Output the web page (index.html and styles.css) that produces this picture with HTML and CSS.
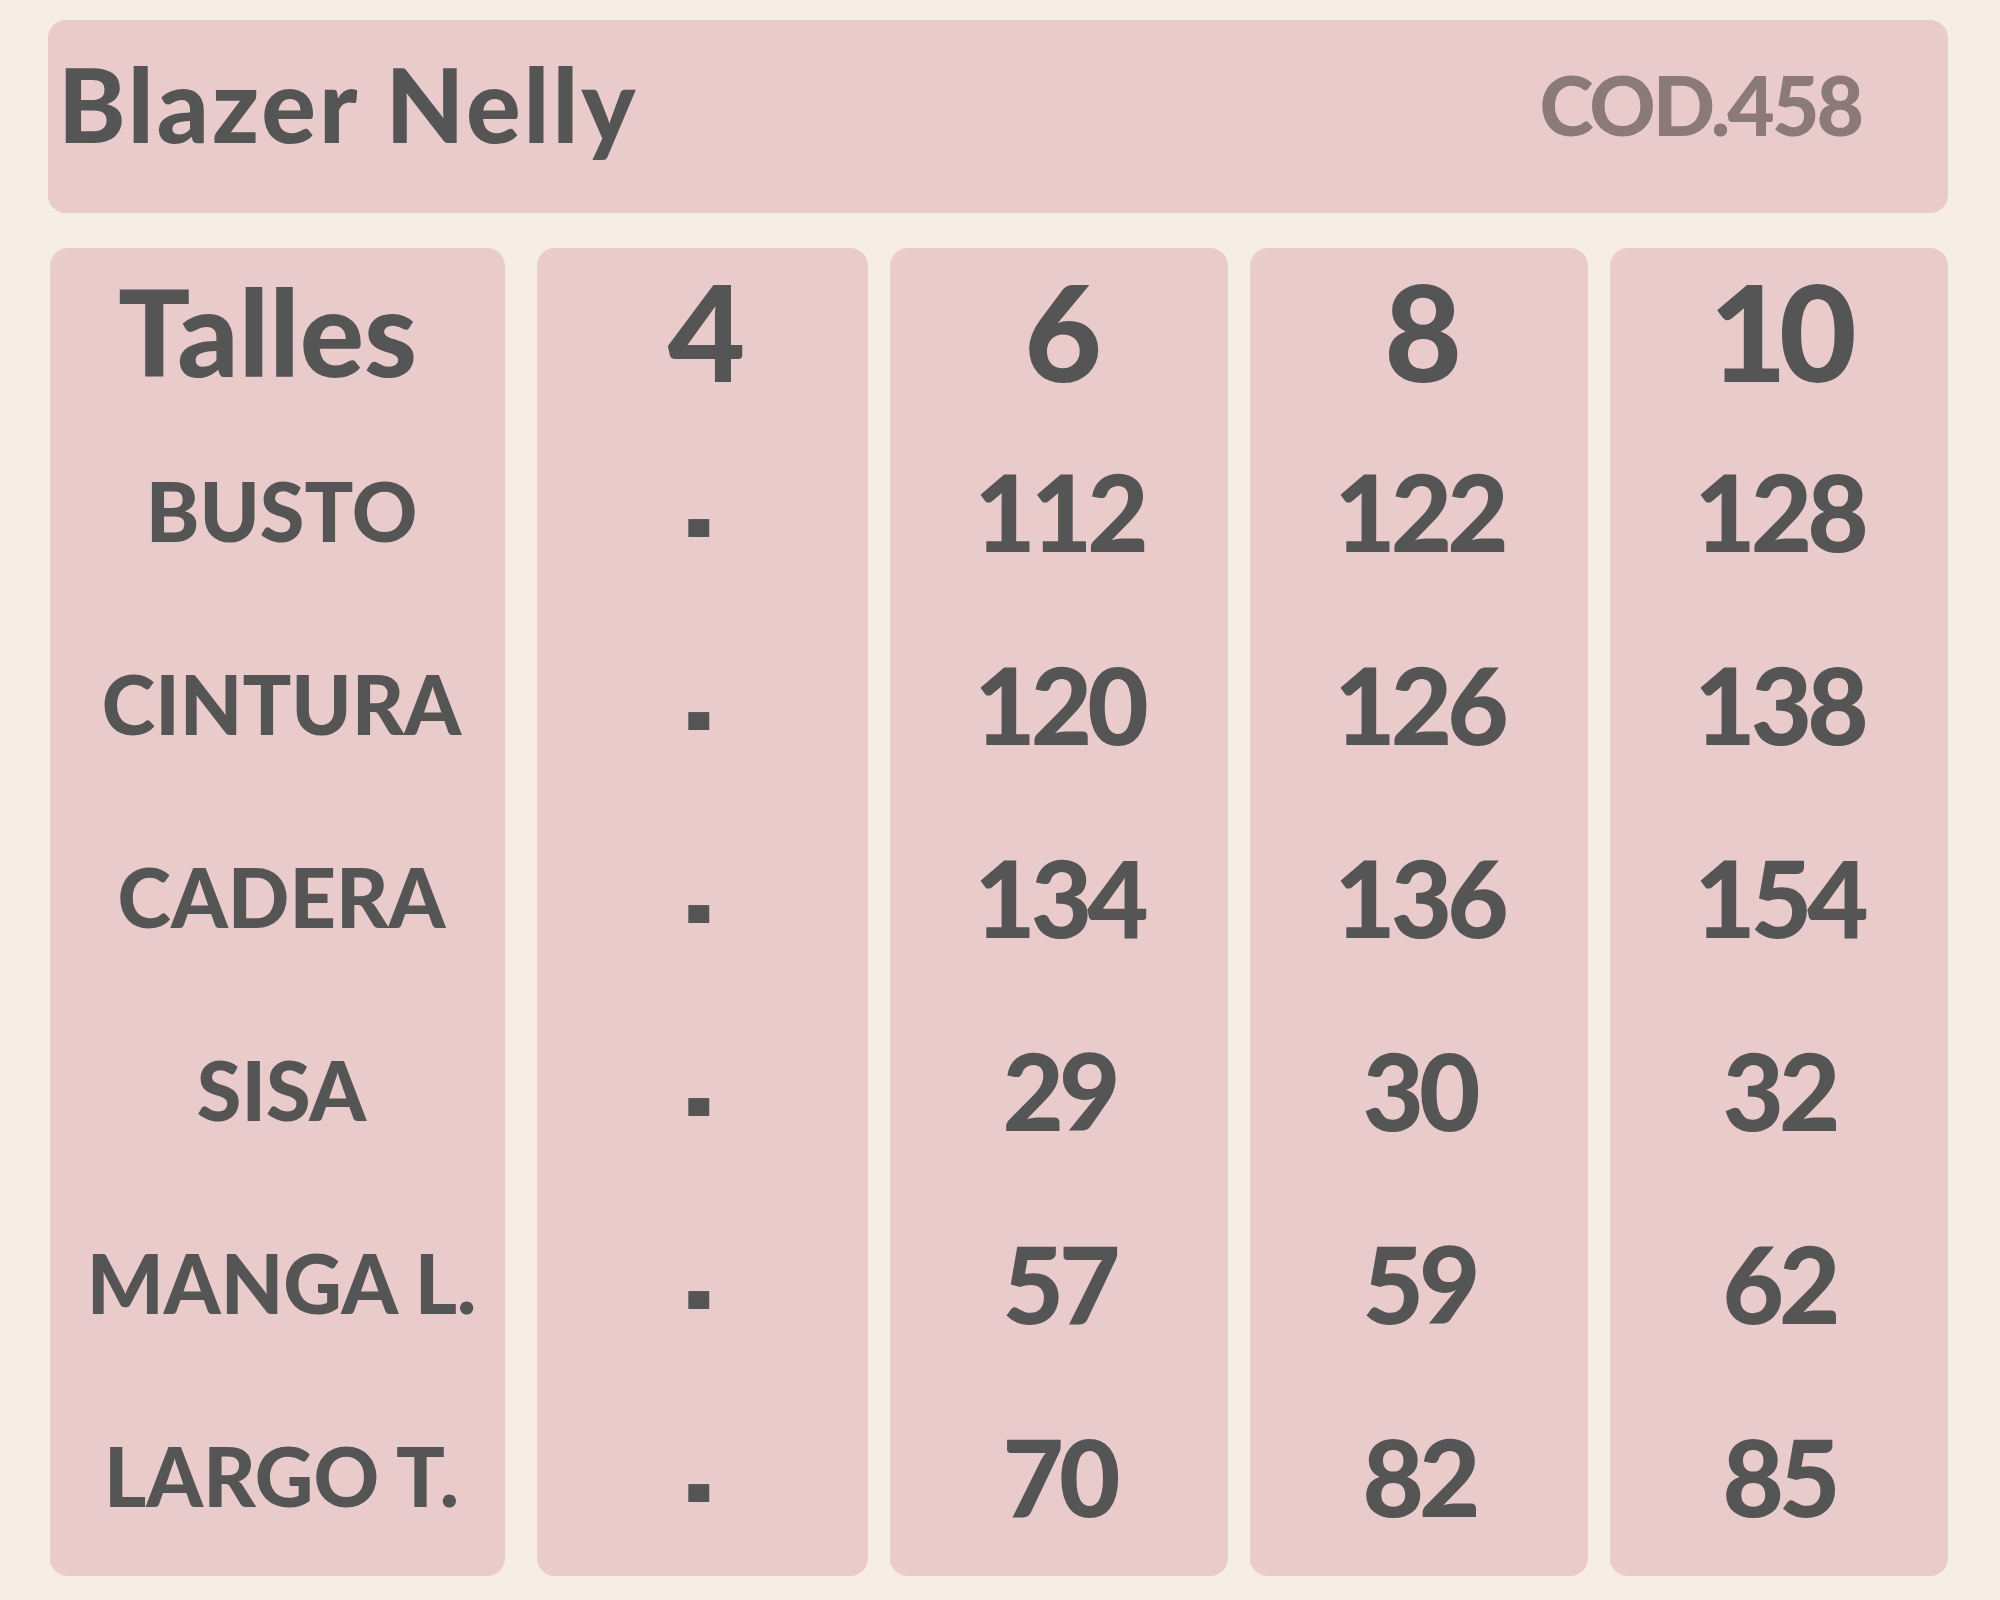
FILE: index.html
```html
<!DOCTYPE html>
<html lang="es">
<head>
<meta charset="utf-8">
<title>Blazer Nelly - Talles</title>
<link rel="stylesheet" href="styles.css">
</head>
<body>
<div class="page">
  <div class="header">
    <h1 class="title">Blazer Nelly</h1>
    <span class="code">COD.458</span>
  </div>
  <div class="sizes">
    <div class="col labels">
      <div class="cell head">Talles</div>
      <div class="cell">BUSTO</div>
      <div class="cell">CINTURA</div>
      <div class="cell">CADERA</div>
      <div class="cell">SISA</div>
      <div class="cell">MANGA L.</div>
      <div class="cell">LARGO T.</div>
    </div>
    <div class="col narrow">
      <div class="cell head">4</div>
      <div class="cell"><span class="dash">-</span></div>
      <div class="cell"><span class="dash">-</span></div>
      <div class="cell"><span class="dash">-</span></div>
      <div class="cell"><span class="dash">-</span></div>
      <div class="cell"><span class="dash">-</span></div>
      <div class="cell"><span class="dash">-</span></div>
    </div>
    <div class="col">
      <div class="cell head">6</div>
      <div class="cell">112</div>
      <div class="cell">120</div>
      <div class="cell">134</div>
      <div class="cell">29</div>
      <div class="cell">57</div>
      <div class="cell">70</div>
    </div>
    <div class="col">
      <div class="cell head">8</div>
      <div class="cell">122</div>
      <div class="cell">126</div>
      <div class="cell">136</div>
      <div class="cell">30</div>
      <div class="cell">59</div>
      <div class="cell">82</div>
    </div>
    <div class="col">
      <div class="cell head">10</div>
      <div class="cell">128</div>
      <div class="cell">138</div>
      <div class="cell">154</div>
      <div class="cell">32</div>
      <div class="cell">62</div>
      <div class="cell">85</div>
    </div>
  </div>
</div>
</body>
</html>
```

FILE: styles.css
```css
html, body {
  margin: 0;
  padding: 0;
}

body {
  background: #f6eee5;
  color: #555555;
  font-family: Lato, "Open Sans", "Liberation Sans", sans-serif;
  font-weight: 900;
}

.page {
  width: 1900px;
  padding: 20px 0 0 48px;
}

.header {
  box-sizing: border-box;
  height: 193px;
  background: #eacbcc;
  border-radius: 18px;
  display: flex;
  align-items: center;
  justify-content: space-between;
  padding: 0 87px 26px 10px;
}

.title {
  margin: 0;
  font-size: 102px;
  line-height: 1;
  font-weight: 900;
  letter-spacing: 3px;
}

.code {
  font-size: 82px;
  line-height: 1;
  color: #8b7a78;
  letter-spacing: -3px;
}

.sizes {
  margin-top: 35px;
  padding-left: 2px;
  display: flex;
  gap: 22px;
}

.col {
  box-sizing: border-box;
  width: 338px;
  height: 1328px;
  padding-bottom: 4px;
  background: #eacbcc;
  border-radius: 18px;
  display: flex;
  flex-direction: column;
}

.col.labels {
  width: 455px;
  margin-right: 10px;
}

.col.narrow {
  width: 331px;
}

.cell {
  height: 193px;
  display: flex;
  align-items: center;
  justify-content: center;
  font-size: 106px;
  line-height: 1;
  letter-spacing: -5px;
}

.cell.head {
  height: 166px;
  font-size: 134px;
  letter-spacing: -8px;
}

.labels .cell {
  font-size: 81px;
  letter-spacing: 0;
  padding-left: 8px;
}

.labels .cell.head {
  font-size: 120px;
  letter-spacing: 0;
  padding-left: 0;
  padding-right: 20px;
}

.dash {
  display: inline-block;
  font-size: 90px;
  letter-spacing: 0;
  transform: translate(-4px, 4px) scale(0.88, 1.75);
}
```
